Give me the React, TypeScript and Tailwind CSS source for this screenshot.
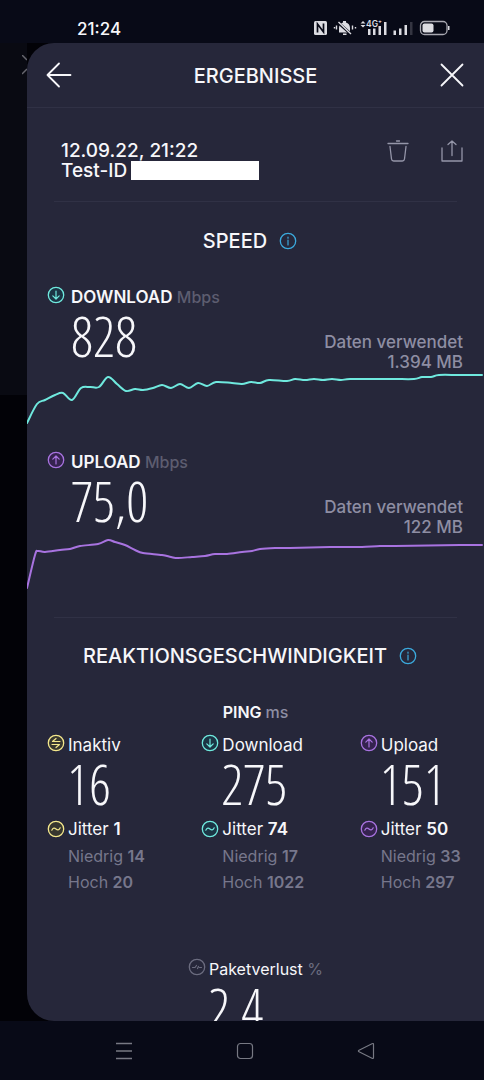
import React from 'react';

type IconKind = 'down' | 'up' | 'idle' | 'jitter' | 'loss' | 'info';
type Point = [number, number];

interface SpeedProps {
  label: string;
  value: string;
  used: string;
  icon: IconKind;
  color: string;
  fill: string;
  points: Point[];
}

interface PingProps {
  label: string;
  icon: IconKind;
  color: string;
  fill: string;
  value: string;
  jitter: string;
  low: string;
  high: string;
}

const TEAL = '#6fe9de';
const PURPLE = '#a873e0';
const YELLOW = '#f3e78c';

const downloadPoints: Point[] = [
  [0, 51], [10, 32], [18, 28], [28, 23], [36, 21], [45, 28], [54, 16], [63, 15], [72, 15], [81, 5],
  [90, 12], [99, 19], [108, 17], [116, 18], [126, 16], [135, 13], [144, 16], [153, 12], [162, 16],
  [171, 11], [180, 14], [189, 10], [205, 11], [215, 12], [224, 10], [233, 11], [242, 8], [260, 9],
  [268, 7], [278, 8], [287, 7], [296, 8], [305, 7], [314, 8], [323, 7], [348, 7], [368, 7],
  [387, 7], [395, 5], [404, 5], [412, 3], [432, 3], [455, 3],
];

const uploadPoints: Point[] = [
  [0, 51], [8, 18], [11, 14], [18, 15], [33, 13], [43, 12], [53, 9], [71, 7], [81, 3], [88, 5],
  [98, 8], [108, 13], [116, 16], [135, 18], [144, 20], [151, 21], [165, 20], [178, 19], [188, 17],
  [200, 17], [215, 15], [225, 14], [233, 12], [248, 11], [263, 11], [303, 10], [318, 10], [335, 10],
  [353, 9], [368, 9], [433, 8], [455, 8],
];

// Catmull-Rom spline as cubic beziers
const toPath = (pts: Point[]): string => {
  let d = `M${pts[0][0]} ${pts[0][1]}`;
  for (let i = 0; i < pts.length - 1; i++) {
    const p0 = pts[i - 1] || pts[i];
    const p1 = pts[i];
    const p2 = pts[i + 1];
    const p3 = pts[i + 2] || p2;
    d += `C${p1[0] + (p2[0] - p0[0]) / 6} ${p1[1] + (p2[1] - p0[1]) / 6} `;
    d += `${p2[0] - (p3[0] - p1[0]) / 6} ${p2[1] - (p3[1] - p1[1]) / 6} ${p2[0]} ${p2[1]}`;
  }
  return d;
};

const iconPaths: Record<IconKind, string> = {
  down: 'M9 5v8M5.8 9.8L9 13l3.2-3.2',
  up: 'M9 13V5M5.8 8.2L9 5l3.2 3.2',
  idle: 'M13 7.5H5.5L9 4.5M5 10.5h7.5L9 13.5',
  jitter: 'M4.8 10.2c1.2-2.6 2.8-2.4 4.2-1.2s3 1.4 4.2-1.2',
  loss: 'M4.5 9.5h2.5l1.5-2M9.5 10.5l1-2M11.5 9.5h2',
  info: 'M9 8v5M9 5v1.2',
};

const CircleIcon: React.FC<{ kind: IconKind; color: string; fill?: string }> = ({ kind, color, fill = 'none' }) => (
  <svg className="size-[18px] shrink-0" viewBox="0 0 18 18" fill="none" stroke={color} aria-hidden="true">
    <circle cx="9" cy="9" r="7.7" fill={fill} strokeWidth="1.3" />
    <path d={iconPaths[kind]} strokeWidth="1.2" strokeLinecap="round" strokeLinejoin="round" />
  </svg>
);

const BigNumber: React.FC<{ children: React.ReactNode }> = ({ children }) => (
  <p className="mt-[3px] mb-0.5 font-['Open_Sans_Condensed_Light','Liberation_Sans_Narrow','Roboto_Condensed',sans-serif] text-[55px] leading-[48px] font-light whitespace-nowrap">
    {children}
  </p>
);

const SectionTitle: React.FC<{ title: string }> = ({ title }) => (
  <div className="flex items-center justify-center gap-3 pr-[11px]">
    <h2 className="text-[20px] leading-7 font-medium">{title}</h2>
    <button type="button" aria-label={`Info ${title}`}>
      <CircleIcon kind="info" color="#3ba9dc" />
    </button>
  </div>
);

const Speed: React.FC<SpeedProps> = ({ label, value, used, icon, color, fill, points }) => (
  <section>
    <div className="flex items-end justify-between pr-[21px] pl-[20px]">
      <div className="pb-[10px]">
        <h3 className="flex items-start gap-1.5 text-[17px] leading-6 font-semibold">
          <span className="pt-px">
            <CircleIcon kind={icon} color={color} fill={fill} />
          </span>
          <span>
            {label} <span className="text-base font-medium text-[#5d5d70]">Mbps</span>
          </span>
        </h3>
        <div className="pl-6">
          <BigNumber>{value}</BigNumber>
        </div>
      </div>
      <p className="text-right text-[17px] leading-5 font-medium text-[#8e8ea3]">
        Daten verwendet
        <br />
        {used}
      </p>
    </div>
    <svg className="block h-14 w-full" viewBox="0 0 457 56" preserveAspectRatio="none" fill="none" aria-hidden="true">
      <path d={toPath(points)} stroke={color} strokeWidth="2" strokeLinecap="round" />
    </svg>
  </section>
);

const Ping: React.FC<PingProps> = ({ label, icon, color, fill, value, jitter, low, high }) => (
  <div className="whitespace-nowrap">
    <h4 className="flex items-start gap-[3px] text-[17px] leading-6">
      <span className="pt-px">
        <CircleIcon kind={icon} color={color} fill={fill} />
      </span>
      {label}
    </h4>
    <div className="pl-5">
      <BigNumber>{value}</BigNumber>
    </div>
    <p className="mt-[9px] flex items-center gap-[3px] text-[17px] leading-6">
      <CircleIcon kind="jitter" color={color} fill={fill} />
      <span>
        Jitter <b className="font-semibold">{jitter}</b>
      </span>
    </p>
    <p className="mt-0.5 pl-[21px] text-base leading-[26px] text-[#77778c]">
      Niedrig <b className="font-semibold">{low}</b>
      <br />
      Hoch <b className="font-semibold">{high}</b>
    </p>
  </div>
);

const StatusBar: React.FC = () => (
  <div className="flex h-[43px] shrink-0 items-center justify-between pt-[13px] pr-[34px] pl-[77px]">
    <time className="pt-0.5 text-[17px] leading-6 font-medium">21:24</time>
    <svg className="h-4 w-[136px]" viewBox="0 0 136 16" fill="#dcdce2" aria-hidden="true">
      <rect y="1" width="13" height="14" rx="1.5" />
      <path d="M3.5 12.5V4l6 8V3.5" fill="none" stroke="#080a17" strokeWidth="1.7" />
      <path d="M25 12.5V8c0-3 1.8-5 4-5.5V1h3v1.5c2.2.5 4 2.5 4 5.5v4.5zM29 13.5h3.5v1.5H29z" />
      <path d="M24 2.5l13.5 12" stroke="#080a17" strokeWidth="3" />
      <path d="M24.5 2l12.5 12M22.5 5.5v4M38.5 5.5v4M20.5 7v1.5M41.5 7v1.5" stroke="#dcdce2" strokeWidth="1.4" />
      <path d="M46.5 3.5L49 1l2.5 2.5zM46.5 5L49 7.5 51.5 5z" />
      <text x="52" y="7" fontSize="8.5" fontWeight="600" fontFamily="Inter, sans-serif">4G⁺</text>
      <path d="M54 9h2.5v6H54zM59 8.500h2.500v6.500H59zM64.500 6h2.500v9h-2.500zM70 2h2.500v13H70z" />
      <path d="M79.500 10.500H82V15h-2.500zM85 8.500h2.500V15H85zM90.500 5h2.500v10h-2.500z" />
      <path d="M96 2h2.500v13H96z" fill="#343541" />
      <rect x="106.5" y="1.5" width="26.5" height="13" rx="4" fill="none" stroke="#a9a9b2" strokeWidth="1.3" />
      <rect x="108.5" y="3.5" width="11" height="9" rx="2" />
      <path d="M134 6h1.5v4H134z" />
    </svg>
  </div>
);

const NavBar: React.FC = () => (
  <nav className="flex h-[59px] shrink-0 items-center justify-center pl-1.5 text-[#777983]">
    <button type="button" aria-label="Menu" className="flex w-[121px] justify-center">
      <svg className="size-5" viewBox="0 0 20 20" fill="none" stroke="currentColor" strokeWidth="1.3">
        <path d="M2 2.500h16M2 10h16M2 17.500h16" />
      </svg>
    </button>
    <button type="button" aria-label="Home" className="flex w-[121px] justify-center">
      <svg className="size-5" viewBox="0 0 20 20" fill="none" stroke="currentColor" strokeWidth="1.2">
        <rect x="2.5" y="2.5" width="15" height="15" rx="3" />
      </svg>
    </button>
    <button type="button" aria-label="Back" className="flex w-[121px] justify-center">
      <svg className="size-5" viewBox="0 0 20 20" fill="none" stroke="currentColor" strokeWidth="1.2" strokeLinejoin="round">
        <path d="M3 9.3L16 2.7c1-.5 1.5 0 1.5.8v13c0 .8-.5 1.3-1.5.8L3 10.7c-.8-.4-.8-1 0-1.4z" />
      </svg>
    </button>
  </nav>
);

const App: React.FC = () => {
  return (
    <div className="flex h-screen flex-col overflow-hidden bg-[#080a17] font-['Inter',sans-serif] text-[#f7f7fa]">
      <StatusBar />
      <div className="flex min-h-0 flex-1 bg-[#020207]">
        {/* Page behind the sheet */}
        <div className="w-[27px] shrink-0">
          <div className="flex h-[352px] justify-end bg-[#090a12] pt-3">
            <svg className="h-5 w-[5px]" viewBox="0 0 5 20" fill="none" stroke="#66666e" strokeWidth="1.5" aria-hidden="true">
              <path d="M0 0l5 5M0 19l5-5" />
            </svg>
          </div>
        </div>
        <div className="min-w-0 flex-1 overflow-hidden rounded-l-[27px] bg-[#26273a]">
          <header className="flex h-[65px] items-center justify-between border-b border-[#303145] px-[19px]">
            <button type="button" aria-label="Zurück">
              <svg className="size-[26px]" viewBox="0 0 26 26" fill="none" stroke="currentColor" strokeWidth="1.8" strokeLinecap="round" strokeLinejoin="round">
                <path d="M24.5 13H1.5M13 1.5L1.5 13 13 24.5" />
              </svg>
            </button>
            <h1 className="pt-0.5 text-[20px] leading-7 font-medium">ERGEBNISSE</h1>
            <button type="button" aria-label="Schließen">
              <svg className="size-[26px]" viewBox="0 0 26 26" fill="none" stroke="currentColor" strokeWidth="1.8" strokeLinecap="round">
                <path d="M2.5 2.5l21 21M23.5 2.5l-21 21" />
              </svg>
            </button>
          </header>
          <main>
            <div className="mx-[27px] flex justify-between border-b border-[#303145] pt-[33px] pb-[20px] pl-[7px]">
              <div className="text-[19px] leading-5 font-medium">
                <p>12.09.22, 21:22</p>
                <p className="flex gap-1">
                  Test-ID <span className="h-[19px] w-32 bg-white" />
                </p>
              </div>
              <div className="-mt-px -mr-[7px] flex items-start gap-[30px] text-[#9596a9]">
                <button type="button" aria-label="Löschen">
                  <svg className="size-6" viewBox="0 0 24 24" fill="none" stroke="currentColor" strokeWidth="1.3" strokeLinecap="round" strokeLinejoin="round">
                    <path d="M10.5 1h3M2 3.5h20M4 6.5l1.5 12.5c.2 1.5 1 2 2.2 2h8.6c1.2 0 2-.5 2.2-2L20 6.5" />
                  </svg>
                </button>
                <button type="button" aria-label="Teilen">
                  <svg className="size-6" viewBox="0 0 24 24" fill="none" stroke="currentColor" strokeWidth="1.3" strokeLinecap="round" strokeLinejoin="round">
                    <path d="M2 8v13h20V8M12 15.5V1M8 4.5L12 1l4 3.5" />
                  </svg>
                </button>
              </div>
            </div>

            <div className="pt-[25px]">
              <SectionTitle title="SPEED" />
            </div>
            <div className="flex flex-col gap-[22px] pt-[30px]">
              <Speed label="DOWNLOAD" value="828" used="1.394 MB" icon="down" color={TEAL} fill="#1b3444" points={downloadPoints} />
              <Speed label="UPLOAD" value="75,0" used="122 MB" icon="up" color={PURPLE} fill="#35234f" points={uploadPoints} />
            </div>

            <section className="mt-6">
              <hr className="mx-[27px] border-[#303145]" />
              <div className="pt-6">
                <SectionTitle title="REAKTIONSGESCHWINDIGKEIT" />
              </div>
              <h3 className="mt-[30px] text-center text-base leading-6 font-semibold">
                PING <span className="font-medium text-[#8e8ea3]">ms</span>
              </h3>
              <div className="mt-[9px] grid grid-cols-[154fr_158fr_103fr] pr-[21px] pl-[20px]">
                <Ping label="Inaktiv" icon="idle" color={YELLOW} fill="#37372f" value="16" jitter="1" low="14" high="20" />
                <Ping label="Download" icon="down" color={TEAL} fill="#1b3444" value="275" jitter="74" low="17" high="1022" />
                <Ping label="Upload" icon="up" color={PURPLE} fill="#35234f" value="151" jitter="50" low="33" high="297" />
              </div>
              <div className="mt-[62px] flex justify-center">
                <div>
                  <h4 className="flex items-start gap-[3px] text-base leading-6">
                    <span className="pt-px">
                      <CircleIcon kind="loss" color="#6b6c7f" />
                    </span>
                    <span>
                      Paketverlust <span className="text-[#6b6c7f]">%</span>
                    </span>
                  </h4>
                  <div className="pl-5">
                    <BigNumber>2,4</BigNumber>
                  </div>
                </div>
              </div>
            </section>
          </main>
        </div>
      </div>
      <NavBar />
    </div>
  );
};

export default App;
